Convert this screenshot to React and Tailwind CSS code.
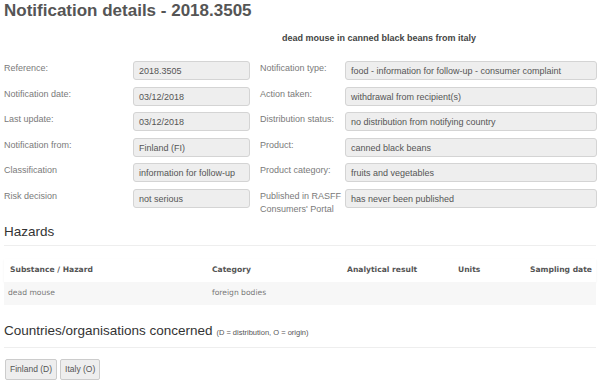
import React from 'react';

const left = [
  ['Reference:', '2018.3505'],
  ['Notification date:', '03/12/2018'],
  ['Last update:', '03/12/2018'],
  ['Notification from:', 'Finland (FI)'],
  ['Classification', 'information for follow-up'],
  ['Risk decision', 'not serious'],
];

const right = [
  ['Notification type:', 'food - information for follow-up - consumer complaint'],
  ['Action taken:', 'withdrawal from recipient(s)'],
  ['Distribution status:', 'no distribution from notifying country'],
  ['Product:', 'canned black beans'],
  ['Product category:', 'fruits and vegetables'],
  ['Published in RASFF Consumers\' Portal', 'has never been published'],
];

function Field({ label, value, labelW, boxW }) {
  return (
    <div className="flex items-start h-[19px]">
      <div className={`${labelW} text-[9px] leading-[13px] text-[#7a7a7a] pt-[1px]`}>{label}</div>
      <div className={`${boxW} h-[19px] rounded-[3px] border border-[#d4d4d4] bg-[#eee] px-[5px] text-[9px] leading-[18px] text-[#555]`}>
        {value}
      </div>
    </div>
  );
}

export default function App() {
  return (
    <div className="w-[600px] h-[382px] overflow-hidden bg-white font-['Liberation_Sans',Arial,sans-serif]">
      {/* Title */}
      <h1 className="pl-[4px] pt-[1px] text-[17px] leading-[20px] font-bold text-[#555]">
        Notification details - 2018.3505
      </h1>
      <p className="mt-[12px] pl-[282px] text-[9px] leading-[11px] font-bold text-[#444]">
        dead mouse in canned black beans from italy
      </p>

      {/* Details form */}
      <div className="mt-[17px] flex">
        <div className="flex flex-col gap-[6.5px] pl-[4px]">
          {left.map(([l, v]) => (
            <Field key={l} label={l} value={v} labelW="w-[129px]" boxW="w-[117px]" />
          ))}
        </div>
        <div className="flex flex-col gap-[6.5px] pl-[10px]">
          {right.map(([l, v]) => (
            <Field key={l} label={l} value={v} labelW="w-[85px]" boxW="w-[252px]" />
          ))}
        </div>
      </div>

      {/* Hazards */}
      <h2 className="mt-[15px] pl-[4px] text-[13.5px] leading-[18px] text-[#333]">Hazards</h2>
      <div className="mt-[4px] mx-[4px] border-b border-[#eee]" />
      <table className="mt-[13px] mx-[4px] w-[592px] font-['DejaVu_Sans',Verdana,sans-serif] text-[7.6px] text-[#555] border-collapse">
        <thead>
          <tr className="h-[23px] shadow-[0_1px_2px_rgba(0,0,0,0.06)]">
            <th className="pl-[6px] text-left font-bold w-[208px]">Substance / Hazard</th>
            <th className="text-left font-bold w-[135px]">Category</th>
            <th className="text-left font-bold w-[111px]">Analytical result</th>
            <th className="text-left font-bold w-[72px]">Units</th>
            <th className="text-left font-bold">Sampling date</th>
          </tr>
        </thead>
        <tbody>
          <tr className="h-[23px] bg-[#f7f7f7]">
            <td className="pl-[4px] text-[#777]">dead mouse</td>
            <td className="text-[#777]">foreign bodies</td>
            <td></td>
            <td></td>
            <td></td>
          </tr>
        </tbody>
      </table>

      {/* Countries */}
      <h2 className="mt-[17px] pl-[4px] text-[13.5px] leading-[18px] text-[#333]">
        Countries/organisations concerned{' '}
        <span className="text-[7.5px] text-[#555]">(D = distribution, O = origin)</span>
      </h2>
      <div className="mt-[5px] mx-[4px] border-b border-[#eee]" />
      <div className="mt-[11px] pl-[5px] flex gap-[3px]">
        <span className="h-[21px] px-[4px] rounded-[2px] border border-[#ccc] bg-[#eee] text-[8.5px] leading-[19px] text-[#555]">Finland (D)</span>
        <span className="h-[21px] px-[4px] rounded-[2px] border border-[#ccc] bg-[#eee] text-[8.5px] leading-[19px] text-[#555]">Italy (O)</span>
      </div>
    </div>
  );
}
